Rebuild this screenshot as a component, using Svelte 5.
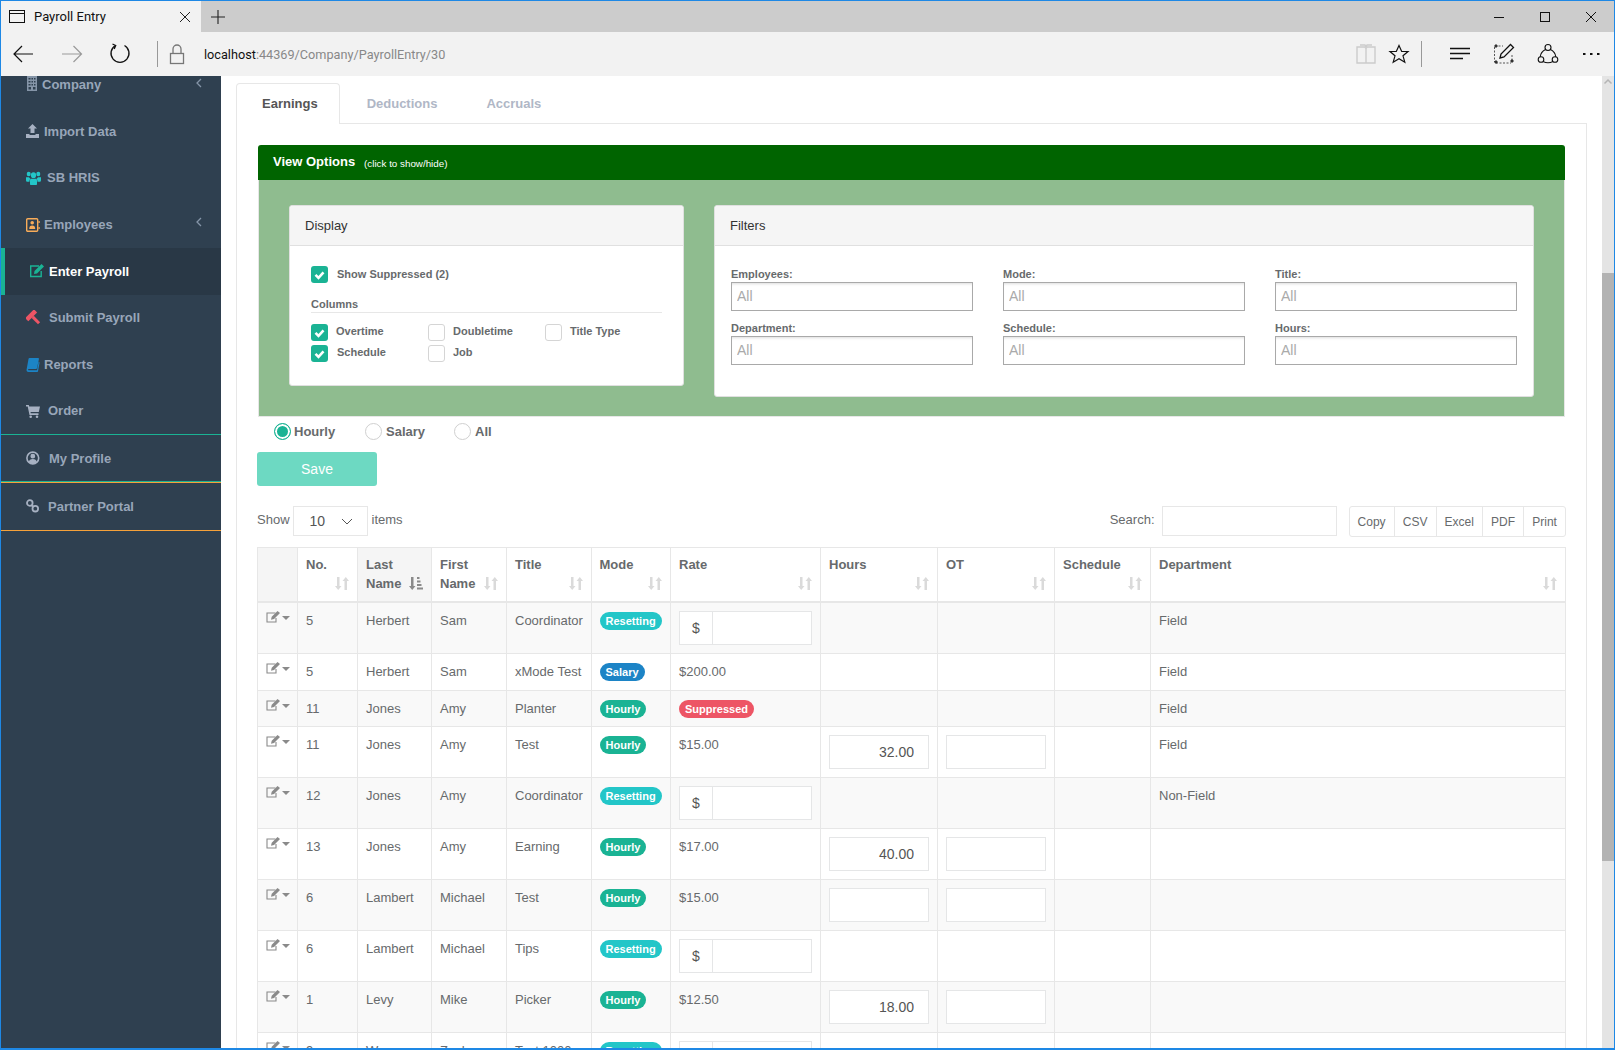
<script>
  const nav = [
    { label: 'Company', icon: 'building', tx: 41, first: true, chev: true },
    { label: 'Import Data', icon: 'upload', tx: 43 },
    { label: 'SB HRIS', icon: 'users', tx: 46 },
    { label: 'Employees', icon: 'book2', tx: 43, chev: true },
    { label: 'Enter Payroll', icon: 'edit', tx: 48, active: true },
    { label: 'Submit Payroll', icon: 'gavel', tx: 48 },
    { label: 'Reports', icon: 'book', tx: 43 },
    { label: 'Order', icon: 'cart', tx: 47, line: 'teal' },
    { label: 'My Profile', icon: 'user', tx: 48, line: 'both' },
    { label: 'Partner Portal', icon: 'link', tx: 47, line: 'orange' }
  ];
  const heads = ['', 'No.', 'Last Name', 'First Name', 'Title', 'Mode', 'Rate', 'Hours', 'OT', 'Schedule', 'Department'];
  const widths = [40, 60, 74, 75, 84.5, 79.5, 150, 117, 117, 96, 415];
  const rows = [
    { no: '5', last: 'Herbert', first: 'Sam', title: 'Coordinator', mode: 'Resetting', dollar: true, dept: 'Field' },
    { no: '5', last: 'Herbert', first: 'Sam', title: 'xMode Test', mode: 'Salary', rate: '$200.00', dept: 'Field' },
    { no: '11', last: 'Jones', first: 'Amy', title: 'Planter', mode: 'Hourly', suppressed: true, dept: 'Field' },
    { no: '11', last: 'Jones', first: 'Amy', title: 'Test', mode: 'Hourly', rate: '$15.00', hours: '32.00', inputs: true, dept: 'Field' },
    { no: '12', last: 'Jones', first: 'Amy', title: 'Coordinator', mode: 'Resetting', dollar: true, dept: 'Non-Field' },
    { no: '13', last: 'Jones', first: 'Amy', title: 'Earning', mode: 'Hourly', rate: '$17.00', hours: '40.00', inputs: true, dept: '' },
    { no: '6', last: 'Lambert', first: 'Michael', title: 'Test', mode: 'Hourly', rate: '$15.00', hours: '', inputs: true, dept: '' },
    { no: '6', last: 'Lambert', first: 'Michael', title: 'Tips', mode: 'Resetting', dollar: true, dept: '' },
    { no: '1', last: 'Levy', first: 'Mike', title: 'Picker', mode: 'Hourly', rate: '$12.50', hours: '18.00', inputs: true, dept: '' },
    { no: '9', last: 'Wysong', first: 'Zach', title: 'Test 1000', mode: 'Resetting', dollar: true, dept: '' }
  ];
  const filters = ['Employees:', 'Mode:', 'Title:', 'Department:', 'Schedule:', 'Hours:'];
  const exportsList = ['Copy', 'CSV', 'Excel', 'PDF', 'Print'];
</script>

{#snippet check(label, on)}
  <div class="check">
    {#if on}
      <span class="box on"><svg width="17" height="17" viewBox="0 0 17 17"><path d="M4.5 8.8l3 3 5-5.4" fill="none" stroke="#fff" stroke-width="2.6"/></svg></span>
    {:else}
      <span class="box"></span>
    {/if}
    <span class="clabel">{label}</span>
  </div>
{/snippet}

{#snippet navIcon(name)}
  <svg class="nicon" width="16" height="16" viewBox="0 0 16 16">
    {#if name === 'building'}
      <path fill="#8595a8" fill-rule="evenodd" d="M1 0h10v15H1zM2.500 2v1.500h2V2zm3 0v1.500h1.500V2zm2.500 0v1.500h1.500V2zM2.500 5v1.500h2V5zm3 0v1.500h1.500V5zm2.500 0v1.500h1.500V5zM2.500 8v1.500h2V8zm3 0v1.500h1.500V8zm2.500 0v1.500h1.500V8zM2.500 11v2.500h2.500V11zM7 11v2.500h2.500V11z"/>
    {:else if name === 'upload'}
      <path fill="#a7b1c2" d="M6.500 1L11 5.500H8.500V10h-4V5.500H2zM0 11h3.500v1h6v-1H13v4H0z"/>
    {:else if name === 'users'}
      <path fill="#23c6c8" transform="translate(0 -1.500) scale(1 1.100)" d="M7.500 3.500a2.600 2.600 0 110 5.200 2.600 2.600 0 010-5.200zM2.700 3a2 2 0 110 4 2 2 0 010-4zM12.300 3a2 2 0 110 4 2 2 0 010-4zM0 8h3a4 4 0 001.400 1.300C3.700 10 3.500 11 3.500 12H1c-1 0-1-1-1-2zM15 8v2c0 1 0 2-1 2h-2.500c0-1-.2-2-.9-2.700A4 4 0 0012 8zM5 9.300h5c.8 0 1 1 1 2V14c0 .6-.4 1-1 1H5c-.6 0-1-.4-1-1v-2.700c0-1 .2-2 1-2z"/>
    {:else if name === 'book2'}
      <rect x=".7" y="1.700" width="11" height="12.600" rx="1" fill="none" stroke="#f8ac59" stroke-width="1.400"/>
      <path fill="#f8ac59" d="M6.200 4a1.800 1.800 0 110 3.600 1.800 1.800 0 010-3.600zM3.200 12c0-2.500 1-3.600 3-3.600s3 1.100 3 3.600zM12.500 4h1.200v2h-1.200zM12.500 10h1.200v2h-1.200z"/>
    {:else if name === 'edit'}
      <path fill="none" stroke="#1ab394" stroke-width="1.400" d="M10 3H1.700v10.500h10.500V8"/>
      <path fill="#1ab394" d="M12.500 1L15 3.500 8 10.500l-3 .6.500-3z"/>
    {:else if name === 'gavel'}
      <g fill="#ed5565" transform="rotate(45 5.500 6)">
        <rect x="2.500" y="-.5" width="4.500" height="12.500"/>
        <rect x="7" y="4.300" width="9" height="3"/>
      </g>
    {:else if name === 'book'}
      <path fill="#1c84c6" d="M3.500 1H12c.7 0 1 .5.900 1.200l-1.900 9c-.1.500-.5.800-1 .8H2.700c-.5 0-.7.400-.6.700s.4.600.8.600H11l1.700-8.500.9.700L12 14.500c-.1.300-.4.500-.8.500H2.500C1 15 .3 13.700.6 12.500L2.500 2c.1-.6.500-1 1-1z"/>
    {:else if name === 'cart'}
      <path fill="#a7b1c2" d="M0 2h2.800l.4 1.500H14L12.800 9H4.500l.3 1.300h7.700V12H3.500L1.700 3.500H0zM4.700 12.500a1.300 1.300 0 110 2.600 1.300 1.300 0 010-2.600zM11 12.500a1.300 1.300 0 110 2.600 1.300 1.300 0 010-2.600z"/>
    {:else if name === 'user'}
      <circle cx="6.800" cy="8" r="5.900" fill="none" stroke="#a7b1c2" stroke-width="1.600"/>
      <path fill="#a7b1c2" d="M6.800 3.800a2.400 2.400 0 110 4.800 2.400 2.400 0 010-4.800zM2.800 12c.4-2 1.500-3 4-3s3.600 1 4 3a5.500 5.500 0 01-8 0z"/>
    {:else if name === 'link'}
      <g fill="none" stroke="#a7b1c2" stroke-width="1.800">
        <circle cx="3.800" cy="5" r="2.800"/>
        <circle cx="9.300" cy="10.700" r="2.800"/>
        <path d="M5.500 7l2 2"/>
      </g>
    {/if}
  </svg>
{/snippet}

<div class="window">
  <div class="tabstrip">
    <div class="btab">
      <svg width="17" height="14" viewBox="0 0 17 14"><rect x=".5" y=".5" width="15" height="12" fill="none" stroke="#111"/><path d="M0 3.500h16" stroke="#111"/></svg>
      <span class="btitle">Payroll Entry</span>
      <svg class="bclose" width="12" height="12" viewBox="0 0 12 12"><path d="M1 1l10 10M11 1L1 11" stroke="#222" stroke-width="1"/></svg>
    </div>
    <svg class="bplus" width="14" height="14" viewBox="0 0 14 14"><path d="M7 0v14M0 7h14" stroke="#222" stroke-width="1.100"/></svg>
    <div class="winbtns">
      <svg width="12" height="12" viewBox="0 0 12 12"><path d="M1 6.500h10" stroke="#111"/></svg>
      <svg width="12" height="12" viewBox="0 0 12 12"><rect x="1.500" y="1.500" width="9" height="9" fill="none" stroke="#111"/></svg>
      <svg width="12" height="12" viewBox="0 0 12 12"><path d="M1 1l10 10M11 1L1 11" stroke="#111"/></svg>
    </div>
  </div>
  <div class="toolbar">
    <svg class="navsvg" width="190" height="44" viewBox="0 0 190 44" fill="none">
      <path d="M32 22H13M21 14L13 22l8 8" stroke="#111" stroke-width="1.200"/>
      <path d="M61 22h19M72.500 14l8 8-8 8" stroke="#999" stroke-width="1.200"/>
      <path d="M114.500 13.500a9 9 0 109 0M111.500 12l3.200 1.500-1.500 3.500" stroke="#111" stroke-width="1.300"/>
      <path d="M156.500 9v26" stroke="#999"/>
      <rect x="169.500" y="21.500" width="13" height="10" stroke="#777" stroke-width="1.300"/>
      <path d="M172 21v-4a4 4 0 018 0v4" stroke="#777" stroke-width="1.300"/>
    </svg>
    <div class="url"><span class="host">localhost</span>:44369/Company/PayrollEntry/30</div>
    <svg class="rightsvg" width="260" height="44" viewBox="0 0 260 44" fill="none">
      <path d="M3 15h8l1 1.500 1-1.500h8v16h-9h-9zM12 17v14M6 13h5l1 2M18 13h-5l-1 2" stroke="#ccc" stroke-width="1.400"/>
      <path d="M45 13.500l2.700 6h6.300l-5 4.300 1.800 6.400-5.800-3.500-5.800 3.500 1.800-6.400-5-4.300h6.300z" stroke="#111" stroke-width="1.200"/>
      <path d="M67.500 9v26" stroke="#999"/>
      <path d="M96 16.500h20M96 21.500h20M96 26.500h13" stroke="#111" stroke-width="1.300"/>
      <path d="M141 14h8M140.500 15v15M158 23v7M142 31h15" stroke="#555" stroke-dasharray="2 1.500"/>
      <path d="M141 13h2v2h-2zM157 28h2v2h-2zM141 29h2v2h-2z" fill="#333" stroke="#333"/>
      <path d="M146 26l1-4 9.500-9.500 3 3-9.500 9.500z" stroke="#111" stroke-width="1.300"/>
      <g transform="translate(3 0)">
        <circle cx="191" cy="15.500" r="3" stroke="#111" stroke-width="1.100"/>
        <circle cx="184" cy="27.500" r="2.800" stroke="#111" stroke-width="1.100"/>
        <circle cx="198" cy="27.500" r="2.800" stroke="#111" stroke-width="1.100"/>
        <path d="M188.500 17.500c-3 1.500-5 4-5.300 7.500M193.500 17.500c3 1.500 5 4 5.300 7.500M186 29.500c3 1.500 7 1.500 10 0" stroke="#111" stroke-width="1.100"/>
      </g>
      <path d="M229 22h2.500M236 22h2.500M243 22h2.500" stroke="#111" stroke-width="2"/>
    </svg>
  </div>

  <div class="body">
    <aside class="sidebar">
      {#each nav as n}
        <div class="nitem" class:first={n.first} class:active={n.active} class:teal={n.line === 'teal'} class:both={n.line === 'both'} class:orange={n.line === 'orange'}>
          <span class="nicon-wrap" style="width:{n.tx - (n.active ? 28 : 25)}px">{@render navIcon(n.icon)}</span>
          <span class="nlabel">{n.label}</span>
          {#if n.chev}
            <svg class="chev" width="6" height="10" viewBox="0 0 6 10"><path d="M5 1L1 5l4 4" fill="none" stroke="#8595a8" stroke-width="1.300"/></svg>
          {/if}
        </div>
      {/each}
    </aside>

    <main class="main">
      <div class="tabs">
        <div class="tab current">Earnings</div>
        <div class="tab">Deductions</div>
        <div class="tab">Accruals</div>
      </div>
      <div class="panel">
        <div class="vo-head"><strong>View Options</strong><small>(click to show/hide)</small></div>
        <div class="vo-body">
          <section class="card display">
            <h3>Display</h3>
            <div class="dbody">
              {@render check('Show Suppressed (2)', true)}
              <div class="collabel">Columns</div>
              <div class="colgrid">
                {@render check('Overtime', true)}
                {@render check('Doubletime', false)}
                {@render check('Title Type', false)}
                {@render check('Schedule', true)}
                {@render check('Job', false)}
              </div>
            </div>
          </section>
          <section class="card filters">
            <h3>Filters</h3>
            <div class="fgrid">
              {#each filters as f}
                <div class="fcell">
                  <label for={f}>{f}</label>
                  <input id={f} placeholder="All" />
                </div>
              {/each}
            </div>
          </section>
        </div>

        <div class="radios">
          <div class="radio"><span class="rdot on"></span><span>Hourly</span></div>
          <div class="radio"><span class="rdot"></span><span>Salary</span></div>
          <div class="radio"><span class="rdot"></span><span>All</span></div>
        </div>
        <button class="save">Save</button>

        <div class="tbar">
          <div class="show">
            <span>Show</span>
            <div class="sel"><span>10</span><svg width="12" height="7" viewBox="0 0 12 7"><path d="M1 1l5 5 5-5" fill="none" stroke="#555"/></svg></div>
            <span>items</span>
          </div>
          <div class="search">
            <span>Search:</span>
            <div class="sinput"></div>
            <div class="exports">
              {#each exportsList as e}<div class="exp">{e}</div>{/each}
            </div>
          </div>
        </div>

        <table>
          <colgroup>{#each widths as w}<col style="width:{w}px" />{/each}</colgroup>
          <thead>
            <tr>
              {#each heads as h, i}
                <th class:shade={i === 0 || i === 2}>
                  {h}
                  {#if i === 2}
                    <svg class="sort" width="14" height="13" viewBox="0 0 14 13"><path fill="#8a8a8a" d="M2 0h2.500v9H6.500L3.200 13 0 9h2zM8 0h2.500v2H8zM8 3.500h3.500v2H8zM8 7h4.500v2H8zM8 10.500h6v2H8z"/></svg>
                  {:else if i > 0}
                    <svg class="sort" width="14" height="13" viewBox="0 0 14 13"><path fill="#dadada" d="M2 0h2.500v9H6.500L3.200 13 0 9h2zM9.500 13H12V4h2L10.800 0 7.500 4h2z"/></svg>
                  {/if}
                </th>
              {/each}
            </tr>
          </thead>
          <tbody>
            {#each rows as r}
              <tr>
                <td class="act">
                  <svg width="25" height="12" viewBox="0 0 25 12"><path d="M9.500 2H1v9h9V7" fill="none" stroke="#8a8a8a" stroke-width="1.100"/><path fill="#8a8a8a" d="M11.500 0L14 2l-6 6-3 .8.700-3zM16 5h8l-4 4z"/></svg>
                </td>
                <td>{r.no}</td>
                <td>{r.last}</td>
                <td>{r.first}</td>
                <td>{r.title}</td>
                <td><span class="badge {r.mode.toLowerCase()}">{r.mode}</span></td>
                <td>
                  {#if r.dollar}
                    <div class="igroup"><span>$</span><div class="ibox"></div></div>
                  {:else if r.suppressed}
                    <span class="badge suppressed">Suppressed</span>
                  {:else}
                    {r.rate}
                  {/if}
                </td>
                <td>{#if r.inputs}<input class="num" value={r.hours} readonly />{/if}</td>
                <td>{#if r.inputs}<input class="num" value="" readonly />{/if}</td>
                <td></td>
                <td>{r.dept}</td>
              </tr>
            {/each}
          </tbody>
        </table>
      </div>
    </main>

    <div class="scroll">
      <svg width="12" height="12" viewBox="0 0 12 12"><path d="M2.500 7.500L6 4l3.500 3.500" fill="none" stroke="#b5b5b5" stroke-width="1.500"/></svg>
      <div class="thumb"></div>
    </div>
  </div>
</div>

<style>
  :global(body) { margin: 0; background: #fff; }
  .window {
    width: 1615px; height: 1050px; box-sizing: border-box;
    border: 1px solid #1e88e5; border-bottom-width: 2px;
    display: flex; flex-direction: column; overflow: hidden;
    font-family: "Liberation Sans", Arial, sans-serif; font-size: 13px; color: #676a6c;
  }
  .tabstrip { height: 31px; flex: none; background: #cccccc; display: flex; align-items: center; }
  .btab { width: 200px; height: 31px; background: #f2f2f2; display: flex; align-items: center; padding-left: 8px; box-sizing: border-box; }
  .btitle { font-family: Roboto, sans-serif; font-size: 13px; color: #111; margin-left: 8px; padding-bottom: 1px; }
  .bclose { margin-left: auto; margin-right: 10px; }
  .bplus { margin-left: 10px; }
  .winbtns { margin-left: auto; display: flex; gap: 34px; padding-right: 17px; }
  .toolbar { height: 44px; flex: none; background: #f2f2f2; display: flex; align-items: center; }
  .url { margin-left: 13px; font-family: Roboto, sans-serif; font-size: 12.700px; color: #888; white-space: nowrap; }
  .host { color: #111; }
  .rightsvg { margin-left: auto; }

  .body { flex: 1; display: flex; min-height: 0; }
  .sidebar { width: 220px; flex: none; background: #2f4050; }
  .nitem { height: 46.670px; box-sizing: border-box; display: flex; align-items: center; padding-left: 25px; font-weight: 700; font-size: 13px; color: #98a6b9; position: relative; }
  .nitem.first { height: 32px; align-items: flex-start; }
  .nitem.first .nlabel { line-height: 18px; }
  .nitem.active { background: #293846; color: #fff; border-left: 4px solid #1ab394; padding-left: 24px; }
  .nitem.teal { border-bottom: 1px solid #1ab394; }
  .nitem.both { border-bottom: 1px solid #f5a13a; box-shadow: inset 0 -1px #1ab394; height: 48px; }
  .nitem.orange { border-bottom: 1px solid #f5a13a; height: 48px; }
  .nicon-wrap { display: inline-flex; flex: none; align-items: center; }
  .chev { position: absolute; right: 19px; top: 50%; margin-top: -8px; }
  .nitem.first .chev { top: 2px; margin-top: 0; }

  .main { flex: 1; min-width: 0; padding: 7px 15px 0; overflow: hidden; background: #fff; }
  .tabs { height: 41px; box-sizing: border-box; display: flex; border-bottom: 1px solid #e7e7e7; }
  .tab { height: 40px; box-sizing: border-box; padding: 0 21px 0 25px; line-height: 39px; font-weight: 700; font-size: 13px; color: #b0b7c6; border: 1px solid transparent; border-bottom: 0; }
  .tab.current { color: #555; background: #fff; border-color: #e7e7e7; height: 41px; border-radius: 4px 4px 0 0; margin-right: 1px; }
  .tab:last-child { margin-left: 1px; }
  .panel { border-left: 1px solid #e7e7e7; border-right: 1px solid #e7e7e7; padding: 21px 21px 0; }
  .vo-head { height: 35px; box-sizing: border-box; background: #006400; color: #fff; border-radius: 3px 3px 0 0; display: flex; align-items: center; padding: 0 0 2px 15px; }
  .vo-head strong { font-size: 13px; }
  .vo-head small { font-size: 9.800px; margin-left: 9px; padding-top: 4px; }
  .vo-body { height: 237px; box-sizing: border-box; background: #8fbc8f; border: 1px solid #e7e7e7; border-top: 0; display: flex; gap: 30px; padding: 25px 31px 0 30px; align-items: flex-start; }
  .card { background: #fff; border: 1px solid #e0e0e0; border-radius: 3px; box-sizing: border-box; }
  .card h3 { margin: 0; height: 40px; box-sizing: border-box; background: #f5f5f5; border-bottom: 1px solid #e0e0e0; font-size: 13px; font-weight: 400; color: #333; line-height: 39px; padding-left: 15px; border-radius: 3px 3px 0 0; }
  .display { width: 395px; }
  .filters { flex: 1; }
  .dbody { padding: 20px 21px 23px; }
  .check { display: flex; align-items: center; gap: 9px; height: 17px; font-size: 11px; font-weight: 700; }
  .clabel { padding-bottom: 2px; }
  .box { width: 17px; height: 17px; box-sizing: border-box; border: 1px solid #d5d5d5; border-radius: 3px; background: #fff; flex: none; display: block; }
  .box.on { background: #1ab394; border: 0; }
  .box svg { display: block; }
  .collabel { margin-top: 14px; height: 15px; line-height: 14px; font-size: 11px; font-weight: 700; border-bottom: 1px solid #e7e7e7; }
  .colgrid { display: grid; grid-template-columns: repeat(3, 117px); row-gap: 4px; margin-top: 11px; }
  .colgrid .check { gap: 8px; }
  .colgrid .check:nth-child(4) { gap: 9px; }
  .colgrid .clabel { padding-bottom: 4px; }
  .fgrid { display: grid; grid-template-columns: repeat(3, 242px); gap: 10px 30px; padding: 21px 16px 31px; }
  .fcell label { display: block; height: 15px; line-height: 15px; font-size: 11px; font-weight: 700; }
  .fcell input { display: block; width: 100%; height: 29px; box-sizing: border-box; border: 1px solid #a9a9a9; box-shadow: inset 0 3px 3px -2px #ddd; padding: 0 6px 2px 5px; font: 14px "Liberation Sans", Arial, sans-serif; outline: none; }
  .fcell input::placeholder { color: #aaa; opacity: 1; }

  .radios { height: 28px; display: flex; align-items: center; padding-left: 16px; font-weight: 700; font-size: 13px; }
  .radio { display: flex; align-items: center; gap: 3px; }
  .radio:nth-child(n+2) { gap: 4px; }
  .radio:nth-child(1) { width: 91px; }
  .radio:nth-child(2) { width: 89px; }
  .rdot { width: 17px; height: 17px; box-sizing: border-box; border: 1px solid #d0d0d0; border-radius: 50%; background: #fff; display: block; }
  .rdot.on { border: 1px solid #1ab394; background: #1ab394; box-shadow: inset 0 0 0 2px #fff; }
  .save { display: block; margin: 7px 0 0 -1px; width: 120px; height: 34px; border: 0; border-radius: 3px; background: #6dd9c2; color: #fff; font: 14px "Liberation Sans", Arial, sans-serif; }
  .tbar { margin: 20px -1px 0; height: 31px; display: flex; justify-content: space-between; align-items: flex-start; }
  .show, .search { display: flex; align-items: flex-start; }
  .show > span, .search > span { font-size: 13px; line-height: 27px; }
  .sel { width: 75px; height: 30px; box-sizing: border-box; border: 1px solid #e7e7e7; margin: 0 4px 0 3px; display: flex; align-items: center; justify-content: space-between; padding: 0 14px 0 16px; font-size: 14px; color: #555; }
  .sinput { width: 175px; height: 30px; box-sizing: border-box; border: 1px solid #e7e7e7; margin: 0 12px 0 7px; }
  .exports { display: flex; width: 217.500px; height: 31px; box-sizing: border-box; border: 1px solid #e7e7e7; border-radius: 3px; }
  .exp { flex: auto; text-align: center; padding: 0 8px; line-height: 31px; font-size: 12px; border-left: 1px solid #e7e7e7; color: #676a6c; }
  .exp:first-child { border-left: 0; }

  table { margin: 10px 0 0 -1px; border-collapse: collapse; table-layout: fixed; width: 1308px; font-size: 13px; color: #676a6c; }
  th, td { border: 1px solid #e7e7e7; padding: 8px; text-align: left; vertical-align: top; line-height: 18.570px; }
  td { padding: 9px 8px 7px; }
  th { font-weight: 700; padding-right: 22px; border-bottom-width: 2px; position: relative; }
  th.shade { background: #f5f5f5; }
  .sort { position: absolute; right: 8px; bottom: 11px; }
  tbody tr:nth-child(odd) { background: #f9f9f9; }
  td.act { padding: 8px 0 0 8px; line-height: 12px; }
  .act svg { display: block; }
  .badge { display: inline-block; height: 18px; line-height: 18px; border-radius: 9px; padding: 0 6px; font-size: 11px; font-weight: 700; color: #fff; margin: 0 0 1.500px; vertical-align: top; }
  .resetting { background: #23c6c8; }
  .salary { background: #1c84c6; }
  .hourly { background: #1ab394; }
  .suppressed { background: #ed5565; }
  .igroup { display: flex; width: 133px; height: 34px; box-sizing: border-box; border: 1px solid #e5e6e7; background: #fff; margin: -1px 0 1px; }
  .igroup span { width: 33px; box-sizing: border-box; text-align: center; line-height: 32px; font-size: 14px; color: #555; border-right: 1px solid #e5e6e7; }
  .ibox { flex: 1; }
  .num { display: block; width: 100px; height: 34px; box-sizing: border-box; border: 1px solid #e5e6e7; background: #fff; text-align: right; padding: 0 14px 0 6px; margin: -1px 0 1px; font: 14px "Liberation Sans", Arial, sans-serif; color: #555; outline: none; }

  .scroll { width: 12px; flex: none; background: #e4e4e4; }
  .scroll svg { display: block; }
  .thumb { margin-top: 185px; height: 588px; background: #b3b3b3; }
</style>
